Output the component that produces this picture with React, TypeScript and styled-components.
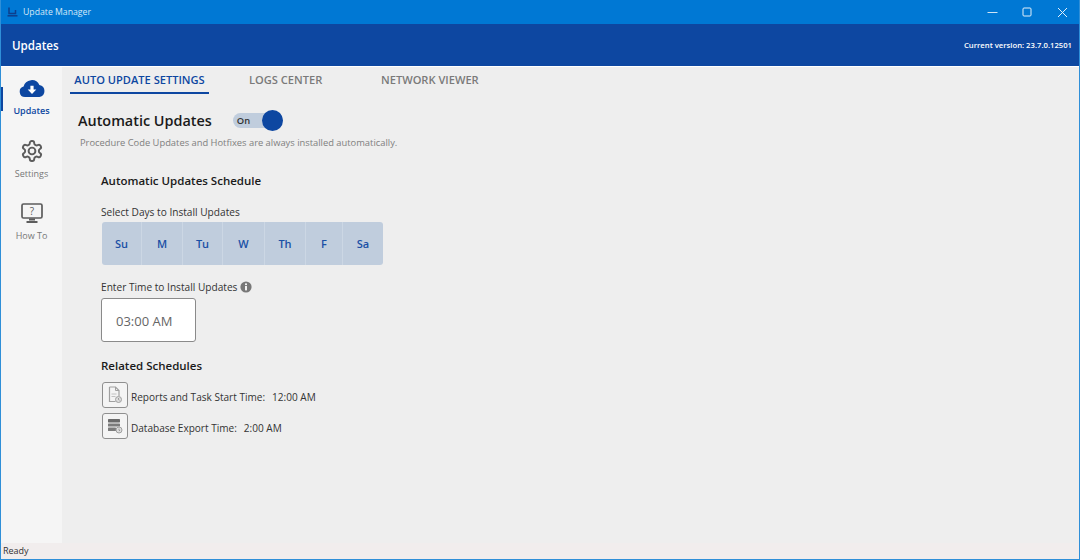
import React from 'react';
import styled, { createGlobalStyle } from 'styled-components';

const GlobalStyle = createGlobalStyle`
  html, body {
    margin: 0;
    padding: 0;
    background: #eeeeee;
  }
  body {
    font-family: "Open Sans", "Noto Sans", sans-serif;
  }
`;

const Window = styled.div`
  width: 1080px;
  height: 560px;
  box-sizing: border-box;
  display: flex;
  flex-direction: column;
  border: 1px solid #2f8fd8;
  border-top: none;
  overflow: hidden;
  background: #eeeeee;
`;

const TitleBar = styled.div`
  height: 24px;
  flex: none;
  display: flex;
  align-items: center;
  background: #0078d4;
  color: #d5e8f7;
  font-size: 8.7px;
  padding-left: 6px;
`;

const TitleText = styled.span`
  flex: 1;
  margin-left: 5px;
`;

const WindowButton = styled.div`
  width: 34px;
  height: 24px;
  display: flex;
  align-items: center;
  justify-content: center;
  margin-left: 1px;
`;

const Header = styled.div`
  height: 42px;
  flex: none;
  display: flex;
  align-items: center;
  justify-content: space-between;
  background: #0d47a1;
  color: #ffffff;
  padding: 0 7px 0 11px;
  border-bottom: 1px solid #ffffff;
`;

const HeaderTitle = styled.span`
  font-size: 11.6px;
  font-weight: 600;
`;

const Version = styled.span`
  font-size: 7.7px;
  font-weight: 600;
`;

const Body = styled.div`
  flex: 1;
  display: flex;
  min-height: 0;
`;

const Sidebar = styled.nav`
  width: 61px;
  flex: none;
  display: flex;
  flex-direction: column;
  background: #f5f5f5;
  padding-top: 9px;
`;

const NavItem = styled.div<{ $active?: boolean }>`
  position: relative;
  height: 62.5px;
  flex: none;
  box-sizing: border-box;
  display: flex;
  flex-direction: column;
  align-items: center;
  gap: 4px;
  color: ${({ $active }) => ($active ? '#0d47a1' : '#777777')};
  font-size: 9px;
  font-weight: ${({ $active }) => ($active ? 600 : 400)};

  &::before {
    content: '';
    display: ${({ $active }) => ($active ? 'block' : 'none')};
    position: absolute;
    left: 0;
    top: 11px;
    width: 2px;
    height: 24px;
    background: #0d47a1;
  }
`;

const NavIcon = styled.div`
  height: 24px;
  display: flex;
  align-items: center;
  justify-content: center;
`;

const Content = styled.main`
  flex: 1;
  display: flex;
  flex-direction: column;
  min-width: 0;
`;

const Tabs = styled.div`
  display: flex;
  height: 27px;
  padding-left: 8px;
  flex: none;
`;

const Tab = styled.div<{ $active?: boolean; $width: number; $gap?: number }>`
  width: ${({ $width }) => $width}px;
  height: 27px;
  box-sizing: border-box;
  margin-left: ${({ $gap }) => $gap ?? 0}px;
  padding-top: 5px;
  text-align: ${({ $active }) => ($active ? 'center' : 'left')};
  white-space: nowrap;
  font-size: 11.1px;
  font-weight: 600;
  color: ${({ $active }) => ($active ? '#0d47a1' : '#7a7a7a')};
  border-bottom: 2px solid ${({ $active }) => ($active ? '#0d47a1' : 'transparent')};
`;

const Panel = styled.div`
  padding: 14px 0 0 16px;
  display: flex;
  flex-direction: column;
`;

const TitleRow = styled.div`
  display: flex;
  align-items: center;
  height: 24px;
  gap: 21px;
`;

const PageTitle = styled.h1`
  margin: 0;
  font-size: 14.4px;
  font-weight: 600;
  color: #1a1a1a;
`;

const Toggle = styled.div`
  position: relative;
  width: 50px;
  height: 15px;
  box-sizing: border-box;
  background: #c0cddd;
  border-radius: 8px;
  padding-left: 4px;
  font-size: 9.4px;
  font-weight: 600;
  line-height: 15px;
  color: #333333;
`;

const Knob = styled.span`
  position: absolute;
  right: 0;
  top: -3px;
  width: 21px;
  height: 21px;
  border-radius: 50%;
  background: #0d47a1;
`;

const Hint = styled.p`
  margin: 4px 0 0 2px;
  font-size: 9.35px;
  line-height: 13px;
  color: #808080;
`;

const Section = styled.section`
  margin-left: 23px;
  display: flex;
  flex-direction: column;
`;

const SectionTitle = styled.h2<{ $top: number }>`
  margin: ${({ $top }) => $top}px 0 0;
  font-size: 11.5px;
  line-height: 15px;
  font-weight: 600;
  color: #1a1a1a;
`;

const Label = styled.div<{ $top: number }>`
  display: flex;
  align-items: center;
  gap: 3px;
  margin-top: ${({ $top }) => $top}px;
  font-size: 10.15px;
  line-height: 14px;
  color: #333333;
`;

const Days = styled.div`
  display: flex;
  width: 281px;
  height: 43px;
  margin-top: 3px;
  margin-left: 1px;
  border-radius: 3px;
  background: #c0cddd;
  overflow: hidden;
`;

const Day = styled.div<{ $width: number }>`
  width: ${({ $width }) => $width}px;
  box-sizing: border-box;
  display: flex;
  align-items: center;
  justify-content: center;
  font-size: 11px;
  font-weight: 600;
  color: #1a50a5;
  border-right: 1px solid #ccd7e4;

  &:last-child {
    border-right: none;
  }
`;

const TimeBox = styled.div`
  width: 95px;
  height: 44px;
  box-sizing: border-box;
  margin-top: 4px;
  display: flex;
  align-items: center;
  padding: 1px 0 0 14px;
  background: #ffffff;
  border: 1.5px solid #8a8a8a;
  border-radius: 3px;
  font-size: 13px;
  color: #666666;
`;

const ScheduleRow = styled.div<{ $top: number }>`
  display: flex;
  align-items: center;
  gap: 3px;
  margin-top: ${({ $top }) => $top}px;
  margin-left: 1px;
  font-size: 10.05px;
  color: #333333;
`;

const ScheduleIcon = styled.div`
  width: 26px;
  height: 26px;
  box-sizing: border-box;
  display: flex;
  align-items: center;
  justify-content: center;
  background: #f4f4f4;
  border: 1.5px solid #8f8f8f;
  border-radius: 3px;
`;

const ScheduleText = styled.span`
  padding-top: 3px;
`;

const ScheduleTime = styled.span`
  margin-left: 7px;
`;

const StatusBar = styled.footer`
  height: 16px;
  flex: none;
  box-sizing: border-box;
  padding-left: 2px;
  background: #f1eded;
  font-size: 9px;
  line-height: 16px;
  color: #333333;
`;

const AppLogo = () => (
  <svg width="11" height="10" viewBox="0 0 11 10">
    <path d="M2 0.5v6h6.5V3" fill="none" stroke="#0d3f8c" strokeWidth="1.5" />
    <path d="M0.5 8.8h10" stroke="#0d3f8c" strokeWidth="1.5" />
  </svg>
);

const CloudIcon = () => (
  <svg width="26" height="17" viewBox="0 0 26 17">
    <path
      d="M6 17a5.3 5.3 0 0 1-1.4-10.4A8.4 8.4 0 0 1 20.4 5 6.1 6.1 0 0 1 20.5 17z"
      fill="#0d47a1"
    />
    <path d="M11.4 5.8h3.2v3.6h2.7L13 14 8.7 9.4h2.7z" fill="#ffffff" />
  </svg>
);

const GearIcon = () => (
  <svg width="24" height="24" viewBox="0 0 24 24" fill="none" stroke="#5c5c5c" strokeWidth="1.9">
    <path d="M12.22 2h-.44a2 2 0 0 0-2 2v.18a2 2 0 0 1-1 1.73l-.43.25a2 2 0 0 1-2 0l-.15-.08a2 2 0 0 0-2.73.73l-.22.38a2 2 0 0 0 .73 2.73l.15.1a2 2 0 0 1 1 1.72v.51a2 2 0 0 1-1 1.74l-.15.09a2 2 0 0 0-.73 2.73l.22.38a2 2 0 0 0 2.73.73l.15-.08a2 2 0 0 1 2 0l.43.25a2 2 0 0 1 1 1.73V20a2 2 0 0 0 2 2h.44a2 2 0 0 0 2-2v-.18a2 2 0 0 1 1-1.73l.43-.25a2 2 0 0 1 2 0l.15.08a2 2 0 0 0 2.73-.73l.22-.39a2 2 0 0 0-.73-2.73l-.15-.08a2 2 0 0 1-1-1.74v-.5a2 2 0 0 1 1-1.74l.15-.09a2 2 0 0 0 .73-2.73l-.22-.38a2 2 0 0 0-2.73-.73l-.15.08a2 2 0 0 1-2 0l-.43-.25a2 2 0 0 1-1-1.73V4a2 2 0 0 0-2-2z" />
    <circle cx="12" cy="12" r="3.4" />
  </svg>
);

const HelpIcon = () => (
  <svg width="22" height="21" viewBox="0 0 22 21">
    <rect x="1" y="1" width="20" height="14" rx="1.5" fill="none" stroke="#5c5c5c" strokeWidth="1.7" />
    <path d="M8 15.5h6v2H8z" fill="#5c5c5c" />
    <path d="M5.5 18h11v2h-11z" fill="#5c5c5c" />
    <text x="11" y="12" textAnchor="middle" fontSize="10" fill="#5c5c5c" fontFamily="Open Sans, sans-serif">?</text>
  </svg>
);

const InfoIcon = () => (
  <svg width="12" height="12" viewBox="0 0 12 12">
    <circle cx="6" cy="6" r="5.6" fill="#777777" />
    <rect x="5.1" y="2.4" width="1.8" height="1.7" fill="#ffffff" />
    <rect x="5.1" y="5" width="1.8" height="4.4" fill="#ffffff" />
  </svg>
);

const ReportIcon = () => (
  <svg width="16" height="18" viewBox="0 0 16 18" fill="none">
    <path d="M2.5 1h6l3.5 3.5V10M2.5 1v14.5h6" stroke="#a0a0a0" strokeWidth="1.2" />
    <path d="M8.5 1v3.5H12" stroke="#a0a0a0" strokeWidth="1" />
    <path d="M4.5 8h5M4.5 10.5h4" stroke="#bbbbbb" strokeWidth="0.9" />
    <circle cx="11.5" cy="13.5" r="3" fill="#dddddd" stroke="#a0a0a0" strokeWidth="1" />
    <path d="M11.5 12v1.6l1 .6" stroke="#8a8a8a" strokeWidth="0.8" />
  </svg>
);

const DatabaseIcon = () => (
  <svg width="16" height="16" viewBox="0 0 16 16">
    <rect x="1" y="1" width="12" height="3.4" rx="0.6" fill="#6a6a6a" />
    <rect x="1" y="5.4" width="12" height="3.2" rx="0.6" fill="#7c7c7c" />
    <rect x="1" y="9.6" width="8" height="3.4" rx="0.6" fill="#7c7c7c" />
    <circle cx="12" cy="12" r="3" fill="#dddddd" stroke="#a0a0a0" strokeWidth="1" />
    <path d="M12 10.6v1.6l1 .6" stroke="#8a8a8a" strokeWidth="0.8" fill="none" />
  </svg>
);

const dayCells = [
  { name: 'Su', width: 40 },
  { name: 'M', width: 41 },
  { name: 'Tu', width: 40 },
  { name: 'W', width: 42 },
  { name: 'Th', width: 41 },
  { name: 'F', width: 37 },
  { name: 'Sa', width: 40 },
];

export default function App() {
  return (
    <>
      <GlobalStyle />
      <Window>
        <TitleBar>
          <AppLogo />
          <TitleText>Update Manager</TitleText>
          <WindowButton>
            <svg width="11" height="11" viewBox="0 0 11 11">
              <path d="M0.5 5.5h10" stroke="#cfe4f5" strokeWidth="1" />
            </svg>
          </WindowButton>
          <WindowButton>
            <svg width="10" height="10" viewBox="0 0 10 10">
              <rect x="1" y="1" width="8" height="8" rx="1" fill="none" stroke="#e3f0fa" strokeWidth="1" />
            </svg>
          </WindowButton>
          <WindowButton>
            <svg width="11" height="11" viewBox="0 0 11 11">
              <path d="M1 1l9 9M10 1l-9 9" stroke="#e3f0fa" strokeWidth="1" />
            </svg>
          </WindowButton>
        </TitleBar>
        <Header>
          <HeaderTitle>Updates</HeaderTitle>
          <Version>Current version: 23.7.0.12501</Version>
        </Header>
        <Body>
          <Sidebar>
            <NavItem $active>
              <NavIcon>
                <CloudIcon />
              </NavIcon>
              Updates
            </NavItem>
            <NavItem>
              <NavIcon>
                <GearIcon />
              </NavIcon>
              Settings
            </NavItem>
            <NavItem>
              <NavIcon>
                <HelpIcon />
              </NavIcon>
              How To
            </NavItem>
          </Sidebar>
          <Content>
            <Tabs>
              <Tab $active $width={139}>AUTO UPDATE SETTINGS</Tab>
              <Tab $width={132} $gap={40}>LOGS CENTER</Tab>
              <Tab $width={120}>NETWORK VIEWER</Tab>
            </Tabs>
            <Panel>
              <TitleRow>
                <PageTitle>Automatic Updates</PageTitle>
                <Toggle>
                  On
                  <Knob />
                </Toggle>
              </TitleRow>
              <Hint>Procedure Code Updates and Hotfixes are always installed automatically.</Hint>
              <Section>
                <SectionTitle $top={24}>Automatic Updates Schedule</SectionTitle>
                <Label $top={17}>Select Days to Install Updates</Label>
                <Days>
                  {dayCells.map((day) => (
                    <Day key={day.name} $width={day.width}>
                      {day.name}
                    </Day>
                  ))}
                </Days>
                <Label $top={15}>
                  Enter Time to Install Updates
                  <InfoIcon />
                </Label>
                <TimeBox>03:00 AM</TimeBox>
                <SectionTitle $top={16}>Related Schedules</SectionTitle>
                <ScheduleRow $top={9}>
                  <ScheduleIcon>
                    <ReportIcon />
                  </ScheduleIcon>
                  <ScheduleText>
                    Reports and Task Start Time:
                    <ScheduleTime>12:00 AM</ScheduleTime>
                  </ScheduleText>
                </ScheduleRow>
                <ScheduleRow $top={5}>
                  <ScheduleIcon>
                    <DatabaseIcon />
                  </ScheduleIcon>
                  <ScheduleText>
                    Database Export Time:
                    <ScheduleTime>2:00 AM</ScheduleTime>
                  </ScheduleText>
                </ScheduleRow>
              </Section>
            </Panel>
          </Content>
        </Body>
        <StatusBar>Ready</StatusBar>
      </Window>
    </>
  );
}
